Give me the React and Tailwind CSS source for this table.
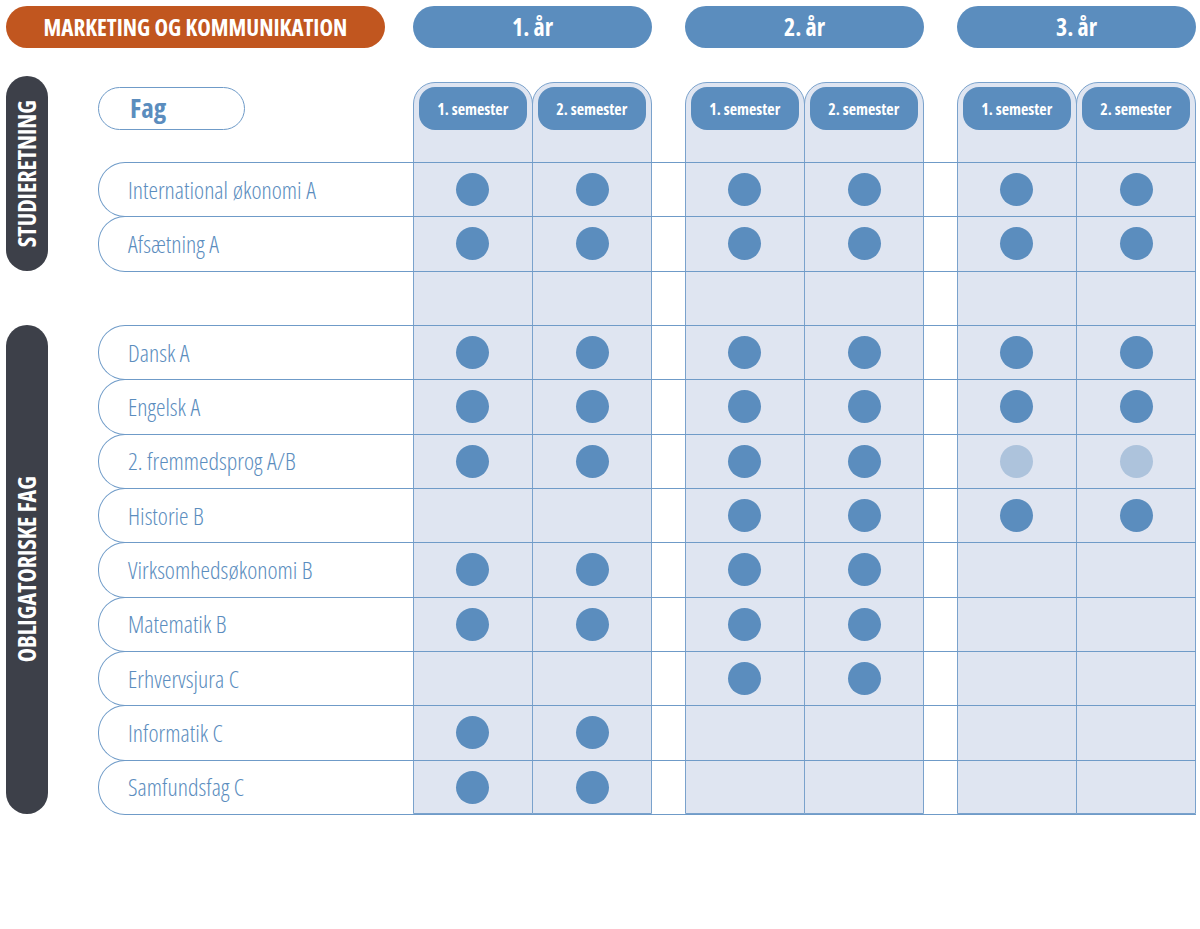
import React from "react";

const rows = [
  { name: "International økonomi A", dots: [1, 1, 1, 1, 1, 1], row: "row-start-4" },
  { name: "Afsætning A", dots: [1, 1, 1, 1, 1, 1], row: "row-start-5" },
  { name: "Dansk A", dots: [1, 1, 1, 1, 1, 1], row: "row-start-7" },
  { name: "Engelsk A", dots: [1, 1, 1, 1, 1, 1], row: "row-start-8" },
  { name: "2. fremmedsprog A/B", dots: [1, 1, 1, 1, 2, 2], row: "row-start-9" },
  { name: "Historie B", dots: [0, 0, 1, 1, 1, 1], row: "row-start-10" },
  { name: "Virksomhedsøkonomi B", dots: [1, 1, 1, 1, 0, 0], row: "row-start-11" },
  { name: "Matematik B", dots: [1, 1, 1, 1, 0, 0], row: "row-start-12" },
  { name: "Erhvervsjura C", dots: [0, 0, 1, 1, 0, 0], row: "row-start-13" },
  { name: "Informatik C", dots: [1, 1, 0, 0, 0, 0], row: "row-start-14" },
  { name: "Samfundsfag C", dots: [1, 1, 0, 0, 0, 0], row: "row-start-15" },
];

const columns = [
  { label: "1. semester", col: "col-start-4" },
  { label: "2. semester", col: "col-start-5 -ml-px" },
  { label: "1. semester", col: "col-start-7" },
  { label: "2. semester", col: "col-start-8 -ml-px" },
  { label: "1. semester", col: "col-start-10" },
  { label: "2. semester", col: "col-start-11 -ml-px" },
];

const years = [
  { label: "1. år", col: "col-start-4 col-end-6" },
  { label: "2. år", col: "col-start-7 col-end-9" },
  { label: "3. år", col: "col-start-10 col-end-12" },
];

const Dot = ({ kind }) => {
  if (!kind) return <div />;
  return (
    <div
      className={`mx-auto h-[33px] w-[33px] rounded-full ${
        kind === 2 ? "bg-[#adc3dc]" : "bg-[#5b8dbe]"
      }`}
    />
  );
};

const SubjectRow = ({ subject }) => (
  <div
    className={`${subject.row} col-start-3 col-end-12 -mb-px grid grid-cols-[314px_119.5px_119.5px_33px_119.5px_119.5px_33px_119.5px_119.5px] items-center rounded-l-[27px] border-y border-l border-[#6f9bc8]`}
  >
    <div className="pl-[29px] text-[24px] font-light text-[#5b8dbe]">{subject.name}</div>
    <Dot kind={subject.dots[0]} />
    <Dot kind={subject.dots[1]} />
    <div />
    <Dot kind={subject.dots[2]} />
    <Dot kind={subject.dots[3]} />
    <div />
    <Dot kind={subject.dots[4]} />
    <Dot kind={subject.dots[5]} />
  </div>
);

export default function App() {
  return (
    <div className="min-h-[929px] bg-white font-['Open_Sans',sans-serif] font-stretch-condensed">
      <div className="grid grid-cols-[42px_50px_315px_119.5px_119.5px_33px_119.5px_119.5px_33px_119.5px_119.5px] grid-rows-[42px_28px_86px_repeat(12,54.333px)] pl-[6px] pt-[6px]">
        <div className="col-start-1 col-end-4 row-start-1 mr-[28px] flex items-center justify-center rounded-full bg-[#c1561f] text-[23px] font-bold text-white">
          MARKETING OG KOMMUNIKATION
        </div>
        {years.map((y) => (
          <div
            key={y.label}
            className={`${y.col} row-start-1 flex items-center justify-center rounded-full bg-[#5b8dbe] text-[24px] font-bold text-white`}
          >
            {y.label}
          </div>
        ))}

        <div className="col-start-1 row-start-3 row-end-6 flex items-center justify-center rounded-full bg-[#3d4049]">
          <span className="rotate-180 text-[24px] font-bold text-white [writing-mode:vertical-rl]">
            STUDIERETNING
          </span>
        </div>
        <div className="col-start-1 row-start-7 row-end-16 flex items-center justify-center rounded-full bg-[#3d4049]">
          <span className="rotate-180 text-[24px] font-bold text-white [writing-mode:vertical-rl]">
            OBLIGATORISKE FAG
          </span>
        </div>

        <div className="col-start-3 row-start-3 mt-[11px] flex h-[43px] w-[147px] items-center rounded-full border border-[#6f9bc8] pl-[31px] text-[27px] font-bold text-[#5b8dbe]">
          Fag
        </div>

        {columns.map((c, i) => (
          <div
            key={i}
            className={`${c.col} row-start-3 row-end-16 mt-[6px] rounded-t-[22px] border border-[#7aa2cc] bg-[#dfe5f1] px-[5px] pt-[4px]`}
          >
            <div className="flex h-[43px] items-center justify-center rounded-[16px] bg-[#5b8dbe] text-[16px] font-bold text-white">
              {c.label}
            </div>
          </div>
        ))}

        {rows.map((r) => (
          <SubjectRow key={r.name} subject={r} />
        ))}
      </div>
    </div>
  );
}
